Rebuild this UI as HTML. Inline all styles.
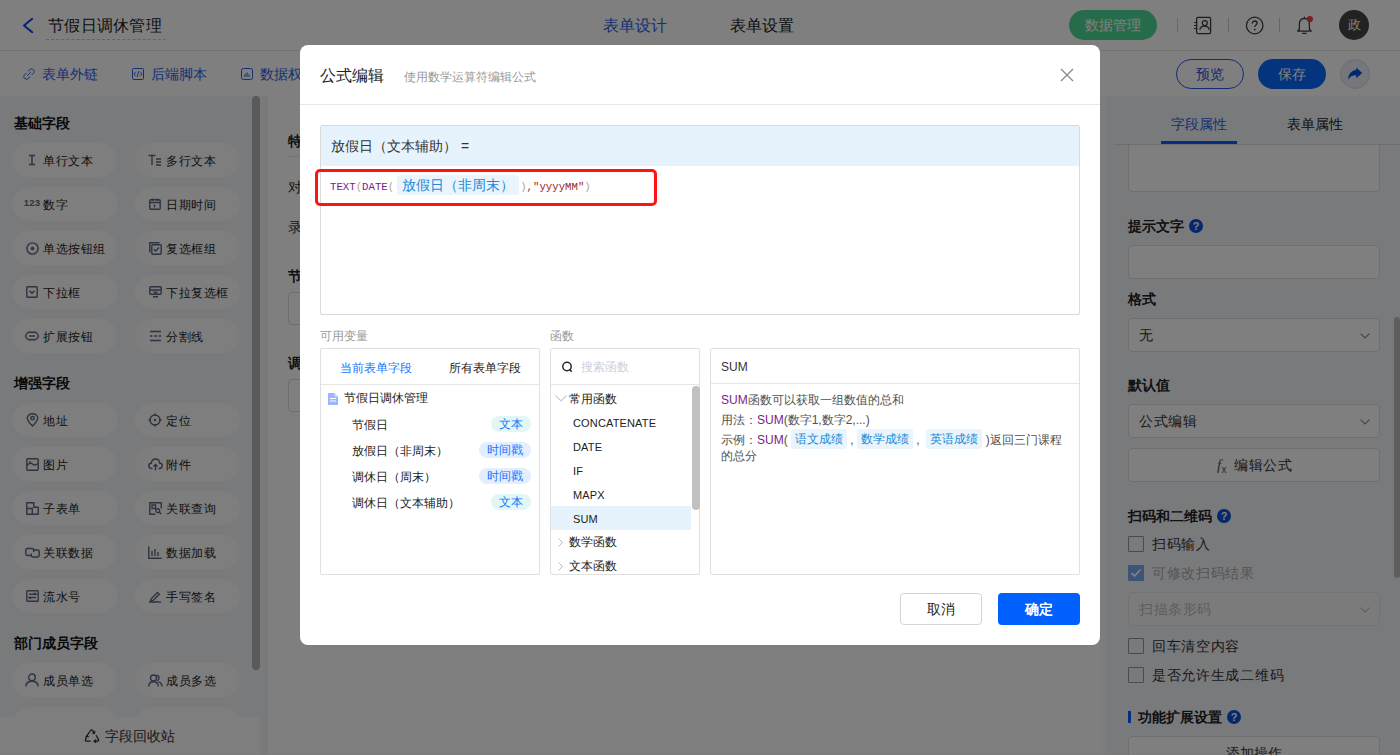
<!DOCTYPE html>
<html><head><meta charset="utf-8">
<style>
*{box-sizing:border-box;margin:0;padding:0}
html,body{width:1400px;height:755px;overflow:hidden;background:#fff;font-family:"Liberation Sans",sans-serif;color:#333}
.a{position:absolute}
#app{position:absolute;left:0;top:0;width:1400px;height:755px;background:#fff}
.hdr{position:absolute;left:0;top:0;width:1400px;height:51px;border-bottom:1px solid #e4e4e4;background:#fff}
.tb{position:absolute;left:0;top:51px;width:1400px;height:45px;background:#fff}
.lp{position:absolute;left:0;top:96px;width:268px;height:659px;background:#f3f5f9}
.chip{position:absolute;width:105px;height:34px;border-radius:17px;background:#fcfcfd;font-size:12px;color:#222;line-height:34px}
.chip .t{position:absolute;left:31px;top:1px;letter-spacing:0.5px}
.chip .ic{position:absolute;left:12px;top:0;width:16px;height:34px;display:flex;align-items:center;justify-content:center;font-style:normal}
.lh{position:absolute;left:14px;margin-top:-1px;font-size:14px;font-weight:bold;color:#111;line-height:16px}
.rp{position:absolute;left:1100px;top:96px;width:300px;height:659px;background:#fbfbfb}
.rpi{position:absolute;left:6px;top:0;width:294px;height:659px;background:#f3f5f9}
.mask{position:absolute;left:0;top:0;width:1400px;height:755px;background:rgba(0,0,0,.5)}
.modal{position:absolute;left:300px;top:45px;width:800px;height:600px;background:#fff;border-radius:8px;overflow:hidden}
.tbl{position:absolute;top:1px;height:45px;line-height:45px;font-size:14px;color:#2a5ee8}
.tbl svg{position:absolute;top:16px;left:0}
.tbl span{position:absolute;left:19px;top:0;white-space:nowrap}
.inp{position:absolute;left:22px;width:252px;height:34px;border:1px solid #dedfe2;border-radius:4px;background:#fff}
.inp .v{position:absolute;left:10px;top:0;line-height:32px;font-size:14px;color:#333;letter-spacing:0.5px}
.inp .chev{position:absolute;right:9px;top:14px}
.inp.dis{background:#f7f7f8;border-color:#e6e6e8}
.lbl{position:absolute;left:22px;font-size:14px;font-weight:bold;line-height:16px;color:#222;white-space:nowrap}
.q{display:inline-block;width:14px;height:14px;border-radius:7px;background:#0b4fd8;color:#fff;font-style:normal;font-size:11px;font-weight:bold;line-height:14px;text-align:center;margin-left:5px;vertical-align:1px}
.cb{position:absolute;left:22px;height:16px;line-height:16px;font-size:14px;color:#333;padding-left:24px;white-space:nowrap;letter-spacing:0.7px}
.cb i{position:absolute;left:0;top:0;width:16px;height:16px;border:1px solid #94949e;border-radius:1px;background:transparent}
.cb.ck{color:#aaa}
.cb.ck i{background:#78a6f5;border-color:#78a6f5}
.cb.ck i svg{position:absolute;left:-1px;top:-1px}
.code{font-family:"Liberation Mono",monospace;font-size:10.7px;line-height:20px;white-space:nowrap;height:20px}
.code span{display:inline-block;vertical-align:top}
.fn{color:#7a1b8c}.pa{color:#b5a58a}.pu{color:#555}.st{color:#a11c1c}
.vt{font-family:"Liberation Sans",sans-serif;font-size:14px;position:relative;top:-2px;color:#1a8ad6;background:#e9f4fd;border-radius:3px;height:20px;line-height:20px;padding:0 5px;margin:0 1px 0 3px}
.sec{top:284px;font-size:12px;line-height:14px;color:#999}
.pnl{top:303px;height:227px;border:1px solid #e0e0e0;border-radius:2px}
.vi{position:absolute;left:31px;width:179px;height:16px;font-size:12px;line-height:16px;color:#222;white-space:nowrap}
.tg{position:absolute;right:0;top:-1px;height:16px;border-radius:8px;padding:0 8px;font-size:12px;line-height:16px;color:#1677ff}
.tg.c{background:#e2f7f5}.tg.b{background:#e3eeff}
.fi{position:absolute;font-size:12px;line-height:14px;color:#222;white-space:nowrap}
.fi.en{font-size:11px;letter-spacing:0.15px}
.ds{position:absolute;left:10px;font-size:12px;line-height:16px;color:#505050}
.pp{color:#7a1b8c}
.dt{display:inline-block;background:#e9f4fd;color:#1a8ad6;border-radius:3px;padding:0 4px;line-height:20px;height:20px;vertical-align:top;margin-top:-3px}
</style></head><body>
<div id="app">
  <div class="hdr">
    <svg class="a" style="left:22px;top:17px" width="12" height="17" viewBox="0 0 12 17"><path d="M10.2 1.8 L2 8.5 L10.2 15.2" fill="none" stroke="#0a46e0" stroke-width="2" stroke-linecap="round" stroke-linejoin="round"/></svg>
    <div class="a" style="left:48px;top:15px;font-size:16px;line-height:22px;color:#222;white-space:nowrap;letter-spacing:0.3px">节假日调休管理</div>
    <div class="a" style="left:46px;top:39px;width:120px;border-top:1px dashed #c8c8c8"></div>
    <div class="a" style="left:603px;top:15px;font-size:16px;line-height:22px;color:#2a5ee8">表单设计</div>
    <div class="a" style="left:730px;top:15px;font-size:16px;line-height:22px;color:#222">表单设置</div>
    <div class="a" style="left:1069px;top:10px;width:88px;height:30px;border-radius:15px;background:#4fd895;color:#fff;font-size:14px;line-height:30px;text-align:center">数据管理</div>
    <div class="a" style="left:1177px;top:18px;width:1px;height:14px;background:#ccc"></div>
    <div class="a" style="left:1228px;top:18px;width:1px;height:14px;background:#ccc"></div>
    <div class="a" style="left:1279px;top:18px;width:1px;height:14px;background:#ccc"></div>
    <svg class="a" style="left:1192px;top:16px" width="20" height="19" viewBox="0 0 20 19"><rect x="4.6" y="1.4" width="14" height="16.2" rx="1.3" fill="none" stroke="#3a3a3a" stroke-width="1.25"/><circle cx="12.8" cy="7" r="2.5" fill="none" stroke="#3a3a3a" stroke-width="1.25"/><path d="M7.8 13.8 C8.2 11.2 10.2 10.2 12.6 10.2 C15 10.2 16.8 11.2 17.2 13.8" fill="none" stroke="#3a3a3a" stroke-width="1.25"/><path d="M2 6.5h3.5M2 9.5h3.5M2 12.5h3.5" stroke="#3a3a3a" stroke-width="1.2"/></svg>
    <svg class="a" style="left:1245px;top:16px" width="19" height="19" viewBox="0 0 19 19"><circle cx="9.7" cy="9.5" r="8.3" fill="none" stroke="#3a3a3a" stroke-width="1.25"/><path d="M7.3 7.4 C7.3 5.9 8.4 5 9.7 5 C11 5 12.1 5.9 12.1 7.2 C12.1 8.8 9.8 9 9.8 11" fill="none" stroke="#3a3a3a" stroke-width="1.3"/><circle cx="9.8" cy="13.6" r="0.85" fill="#3a3a3a"/></svg>
    <svg class="a" style="left:1296px;top:15px" width="18" height="20" viewBox="0 0 18 20"><path d="M1.6 16 L3.4 14.2 L3.4 9 C3.4 5.8 5.6 3.6 8.4 3.4 C11.2 3.6 13.4 5.8 13.4 9 L13.4 14.2 L15.2 16 Z" fill="none" stroke="#3a3a3a" stroke-width="1.25" stroke-linejoin="round"/><path d="M6.8 18.4h3.2" stroke="#3a3a3a" stroke-width="1.3" stroke-linecap="round"/><path d="M8.4 1.8v1.6" stroke="#3a3a3a" stroke-width="1.2"/><circle cx="13.9" cy="4.1" r="3.1" fill="#ff3b3b"/></svg>
    <div class="a" style="left:1339px;top:10px;width:30px;height:30px;border-radius:15px;background:#444;color:#fff;font-size:13px;line-height:30px;text-align:center">政</div>
  </div>
  <div class="tb">
    <div class="tbl" style="left:23px"><svg width="12" height="12" viewBox="0 0 12 12"><path d="M5 3.3 L6.8 1.6 C7.8 0.6 9.5 0.6 10.4 1.6 C11.4 2.5 11.4 4.2 10.4 5.2 L8.6 7 M7 8.7 L5.2 10.4 C4.2 11.4 2.5 11.4 1.6 10.4 C0.6 9.5 0.6 7.8 1.6 6.8 L3.4 5 M4.3 7.7 L7.7 4.3" fill="none" stroke="#2a5ee8" stroke-width="1"/></svg><span>表单外链</span></div>
    <div class="tbl" style="left:132px"><svg width="12" height="12" viewBox="0 0 12 12"><rect x="0.5" y="0.5" width="11" height="11" rx="1" fill="none" stroke="#2a5ee8" stroke-width="1"/><path d="M3.8 3.8 L1.9 6 L3.8 8.2 M8.2 3.8 L10.1 6 L8.2 8.2 M6.9 3 L5.1 9" fill="none" stroke="#2a5ee8" stroke-width="0.9"/></svg><span>后端脚本</span></div>
    <div class="tbl" style="left:241px"><svg width="12" height="12" viewBox="0 0 12 12"><rect x="0.5" y="0.5" width="11" height="11" rx="2" fill="none" stroke="#2a5ee8" stroke-width="1"/><path d="M4 6v3M6 4.5v4.5M8 6.5v2.5" stroke="#2a5ee8" stroke-width="1"/></svg><span>数据权限</span></div>
    <div class="a" style="left:1176px;top:8px;width:68px;height:30px;border:1px solid #1f5ce6;border-radius:15px;color:#1f4fd8;font-size:14px;line-height:28px;text-align:center">预览</div>
    <div class="a" style="left:1258px;top:8px;width:68px;height:30px;border-radius:15px;background:#0a68ff;color:#fff;font-size:14px;line-height:30px;text-align:center">保存</div>
    <div class="a" style="left:1340px;top:8px;width:30px;height:30px;border-radius:15px;background:#eaeef6;border:1px solid #d3dcf0"></div>
    <svg class="a" style="left:1340px;top:8px" width="30" height="30" viewBox="0 0 30 30"><path d="M8 20.8 C8.3 15 11.8 11.4 16.2 11.1 L16.2 8.6 L22.2 13.9 L16.2 19.2 L16.2 16.3 C12.5 16.2 10 17.6 8 20.8 Z" fill="#0a4fe0"/></svg>
  </div>
<div class="a" style="left:288px;top:133px;font-size:14px;font-weight:bold;line-height:16px;color:#222">特殊</div>
<div class="a" style="left:288px;top:156px;width:200px;height:1px;background:#e8e8e8"></div>
<div class="a" style="left:288px;top:179px;font-size:14px;line-height:16px;color:#333">对</div>
<div class="a" style="left:288px;top:219px;font-size:14px;line-height:16px;color:#333">录</div>
<div class="a" style="left:288px;top:268px;font-size:14px;font-weight:bold;line-height:16px;color:#222">节</div>
<div class="a" style="left:288px;top:292px;width:200px;height:33px;border:1px solid #dcdcdc;border-radius:4px"></div>
<div class="a" style="left:288px;top:355px;font-size:14px;font-weight:bold;line-height:16px;color:#222">调</div>
<div class="a" style="left:288px;top:379px;width:200px;height:33px;border:1px solid #dcdcdc;border-radius:4px"></div>
  <div class="lp">
<div class="lh" style="top:20px">基础字段</div>
<div class="lh" style="top:280px">增强字段</div>
<div class="lh" style="top:540px">部门成员字段</div>
<div class="chip" style="left:12px;top:47px"><i class="ic"><svg width="12" height="12" viewBox="0 0 12 12"><path d="M3 1.5h6M3 10.5h6M6 1.5v9" stroke="#5a6682" stroke-width="1.4" fill="none"/></svg></i><span class="t">单行文本</span></div>
<div class="chip" style="left:135px;top:47px"><i class="ic"><svg width="14" height="12" viewBox="0 0 14 12"><path d="M0.5 1.5h7M4 1.5v9.5M8 5h5M8 8h5M8 11h5" stroke="#5a6682" stroke-width="1.4" fill="none"/></svg></i><span class="t">多行文本</span></div>
<div class="chip" style="left:12px;top:91px"><i class="ic"><b style="font-family:'Liberation Sans',sans-serif;font-weight:bold;font-size:9.5px;line-height:10px;color:#5a6682;margin-top:-2px;letter-spacing:0.2px">123</b></i><span class="t">数字</span></div>
<div class="chip" style="left:135px;top:91px"><i class="ic"><svg width="12" height="12" viewBox="0 0 12 12"><rect x="0.8" y="1.8" width="10.4" height="9.4" rx="1" stroke="#5a6682" stroke-width="1.4" fill="none"/><path d="M0.8 4.5h10.4M3.5 0.5v2.5M8.5 0.5v2.5M5.5 6.5v3" stroke="#5a6682" stroke-width="1.4" fill="none"/></svg></i><span class="t">日期时间</span></div>
<div class="chip" style="left:12px;top:135px"><i class="ic"><svg width="13" height="13" viewBox="0 0 13 13"><circle cx="6.5" cy="6.5" r="5.6" stroke="#5a6682" stroke-width="1.4" fill="none"/><circle cx="6.5" cy="6.5" r="1.8" fill="#5d6a85"/></svg></i><span class="t">单选按钮组</span></div>
<div class="chip" style="left:135px;top:135px"><i class="ic"><svg width="13" height="13" viewBox="0 0 13 13"><path d="M0.8 10.5V0.8h9.7" stroke="#5a6682" stroke-width="1.4" fill="none"/><rect x="2.8" y="2.8" width="9.4" height="9.4" rx="1" stroke="#5a6682" stroke-width="1.4" fill="none"/><path d="M4.8 7.3l1.8 1.8 3.4-3.6" stroke="#5a6682" stroke-width="1.4" fill="none"/></svg></i><span class="t">复选框组</span></div>
<div class="chip" style="left:12px;top:179px"><i class="ic"><svg width="12" height="12" viewBox="0 0 12 12"><rect x="0.8" y="0.8" width="10.4" height="10.4" rx="1" stroke="#5a6682" stroke-width="1.4" fill="none"/><path d="M3.5 4.8l2.5 2.4 2.5-2.4" stroke="#5a6682" stroke-width="1.4" fill="none"/></svg></i><span class="t">下拉框</span></div>
<div class="chip" style="left:135px;top:179px"><i class="ic"><svg width="13" height="12" viewBox="0 0 13 12"><rect x="0.8" y="0.8" width="11.4" height="7.4" rx="1" stroke="#5a6682" stroke-width="1.4" fill="none"/><path d="M0.8 4h11.4M4 10.8h5" stroke="#5a6682" stroke-width="1.4" fill="none"/><path d="M4.5 5.5l2 1.5 2-1.5" stroke="#5a6682" stroke-width="1.4" fill="none"/></svg></i><span class="t">下拉复选框</span></div>
<div class="chip" style="left:12px;top:223px"><i class="ic"><svg width="14" height="10" viewBox="0 0 14 10"><rect x="0.8" y="1.3" width="12.4" height="7.4" rx="3.7" stroke="#5a6682" stroke-width="1.4" fill="none"/><path d="M4 5h6" stroke="#5a6682" stroke-width="1.4" fill="none"/></svg></i><span class="t">扩展按钮</span></div>
<div class="chip" style="left:135px;top:223px"><i class="ic"><svg width="13" height="12" viewBox="0 0 13 12"><path d="M1 1.5h11M1 10.5h11M1 6h2.5M5 6h3M9.5 6h2.5" stroke="#5a6682" stroke-width="1.4" fill="none"/></svg></i><span class="t">分割线</span></div>
<div class="chip" style="left:12px;top:307px"><i class="ic"><svg width="13" height="14" viewBox="0 0 13 14"><path d="M6.5 13 C3 9.5 1.3 7 1.3 5.2 C1.3 2.5 3.6 0.8 6.5 0.8 C9.4 0.8 11.7 2.5 11.7 5.2 C11.7 7 10 9.5 6.5 13Z" stroke="#5a6682" stroke-width="1.4" fill="none"/><circle cx="6.5" cy="5.2" r="1.7" stroke="#5a6682" stroke-width="1.4" fill="none"/></svg></i><span class="t">地址</span></div>
<div class="chip" style="left:135px;top:307px"><i class="ic"><svg width="14" height="14" viewBox="0 0 14 14"><circle cx="7" cy="7" r="5" stroke="#5a6682" stroke-width="1.4" fill="none"/><circle cx="7" cy="7" r="1.3" fill="#5d6a85"/><path d="M7 0.5v2.5M7 11v2.5M0.5 7h2.5M11 7h2.5" stroke="#5a6682" stroke-width="1.4" fill="none"/></svg></i><span class="t">定位</span></div>
<div class="chip" style="left:12px;top:351px"><i class="ic"><svg width="13" height="13" viewBox="0 0 13 13"><rect x="0.8" y="0.8" width="11.4" height="11.4" rx="1" stroke="#5a6682" stroke-width="1.4" fill="none"/><path d="M1 7.5 C3 5 5 4.5 7 6.5 C8.5 7.5 10 7 12 5.5" stroke="#5a6682" stroke-width="1.4" fill="none"/><circle cx="4" cy="4" r="0.9" fill="#5d6a85"/></svg></i><span class="t">图片</span></div>
<div class="chip" style="left:135px;top:351px"><i class="ic"><svg width="15" height="13" viewBox="0 0 15 13"><path d="M4.5 10.5H3.5C1.8 10.5 0.8 9.2 0.8 7.8C0.8 6.3 2 5.2 3.3 5.2C3.6 2.7 5.4 1 7.5 1C9.8 1 11.5 2.8 11.6 5C13.1 5 14.2 6.2 14.2 7.7C14.2 9.3 13 10.5 11.5 10.5H10.5" stroke="#5a6682" stroke-width="1.4" fill="none"/><path d="M7.5 12.5V6.5M5.5 8.5l2-2 2 2" stroke="#5a6682" stroke-width="1.4" fill="none"/></svg></i><span class="t">附件</span></div>
<div class="chip" style="left:12px;top:395px"><i class="ic"><svg width="13" height="13" viewBox="0 0 13 13"><path d="M0.8 0.8h7v4.5h4.4v7H0.8Z" stroke="#5a6682" stroke-width="1.4" fill="none"/><path d="M0.8 6.5h5.5v5.7" stroke="#5a6682" stroke-width="1.4" fill="none"/></svg></i><span class="t">子表单</span></div>
<div class="chip" style="left:135px;top:395px"><i class="ic"><svg width="13" height="13" viewBox="0 0 13 13"><path d="M12.2 6.5V0.8H0.8v11.4h5.5" stroke="#5a6682" stroke-width="1.4" fill="none"/><rect x="3" y="3" width="3.5" height="3.5" stroke="#5a6682" stroke-width="1.4" fill="none"/><circle cx="8.7" cy="8.7" r="1.9" stroke="#5a6682" stroke-width="1.4" fill="none"/><path d="M10.1 10.1l2 2" stroke="#5a6682" stroke-width="1.4" fill="none"/></svg></i><span class="t">关联查询</span></div>
<div class="chip" style="left:12px;top:439px"><i class="ic"><svg width="15" height="11" viewBox="0 0 15 11"><path d="M6 8.5H2.5C1.5 8.5 0.8 7.8 0.8 6.8V3.2C0.8 2.2 1.5 1.5 2.5 1.5H7C8 1.5 8.7 2.2 8.7 3.2V5" stroke="#5a6682" stroke-width="1.4" fill="none"/><path d="M9 3H12.5C13.5 3 14.2 3.7 14.2 4.7V8.3C14.2 9.3 13.5 10 12.5 10H8C7 10 6.3 9.3 6.3 8.3V6.5" stroke="#5a6682" stroke-width="1.4" fill="none"/></svg></i><span class="t">关联数据</span></div>
<div class="chip" style="left:135px;top:439px"><i class="ic"><svg width="14" height="13" viewBox="0 0 14 13"><path d="M0.8 0.5v11.7h12.7M4 5v5M7 3v7M10 6v4" stroke="#5a6682" stroke-width="1.4" fill="none"/></svg></i><span class="t">数据加载</span></div>
<div class="chip" style="left:12px;top:483px"><i class="ic"><svg width="13" height="12" viewBox="0 0 13 12"><rect x="0.8" y="0.8" width="11.4" height="10.4" rx="0.8" stroke="#5a6682" stroke-width="1.4" fill="none"/><path d="M3 4.3h7L8.3 2.8M10 7.5H3l1.7 1.5" stroke="#5a6682" stroke-width="1.4" fill="none"/></svg></i><span class="t">流水号</span></div>
<div class="chip" style="left:135px;top:483px"><i class="ic"><svg width="14" height="13" viewBox="0 0 14 13"><path d="M3 9 L9.5 2.5 L11.3 4.3 L4.8 10.8 L2.6 11.2 Z" stroke="#5a6682" stroke-width="1.4" fill="none"/><path d="M1 12.3 C3 11.5 5 12.8 7 12 C9 11.3 11 12.5 13 12" stroke="#5a6682" stroke-width="1.4" fill="none"/></svg></i><span class="t">手写签名</span></div>
<div class="chip" style="left:12px;top:567px"><i class="ic"><svg width="14" height="14" viewBox="0 0 14 14"><circle cx="7" cy="4.3" r="3.3" stroke="#5a6682" stroke-width="1.4" fill="none"/><path d="M1 13.5C1 10 3.5 8.3 7 8.3C10.5 8.3 13 10 13 13.5" stroke="#5a6682" stroke-width="1.4" fill="none"/></svg></i><span class="t">成员单选</span></div>
<div class="chip" style="left:135px;top:567px"><i class="ic"><svg width="15" height="13" viewBox="0 0 15 13"><circle cx="5.5" cy="4" r="3" stroke="#5a6682" stroke-width="1.4" fill="none"/><path d="M0.8 12.5C0.8 9.5 2.8 7.8 5.5 7.8C8.2 7.8 10.2 9.5 10.2 12.5M8.5 1.2C10 1.3 11 2.5 11 4C11 5.5 10 6.5 9 6.8M10.5 7.9C12.5 8.5 14 10 14 12.5" stroke="#5a6682" stroke-width="1.4" fill="none"/></svg></i><span class="t">成员多选</span></div>
<div class="chip" style="left:12px;top:611px"><i class="ic"></i><span class="t"></span></div>
<div class="chip" style="left:135px;top:611px"><i class="ic"></i><span class="t"></span></div>
<div class="a" style="left:252px;top:0;width:8px;height:574px;border-radius:4px;background:#b2b2b2"></div>
<div class="a" style="left:0;top:621px;width:260px;height:38px;background:#fcfcfc;font-size:14px;color:#333;line-height:38px">
<svg class="a" style="left:84px;top:12px" width="16" height="14" viewBox="0 0 16 14"><g fill="none" stroke="#2a2a2a" stroke-width="1.2" stroke-linecap="round" stroke-linejoin="round"><path d="M2.8 6.8 L6.6 1.5 Q7.6 0.4 8.6 1.5 L10.4 4.3"/><path d="M10.4 4.3 L10.9 2.3 M10.4 4.3 L8.4 4"/><path d="M12.2 6.5 L14.6 10.6 Q15 12.2 13.6 12.2 L10.2 12.2"/><path d="M10.2 12.2 L11.8 10.8 M10.2 12.2 L11.8 13.4"/><path d="M6.2 12.2 L2.4 12.2 Q1 12.1 1.4 10.7 L2.4 8.9"/><path d="M2.8 6.8 L1.8 8.4 M2.8 6.8 L4.4 7.8"/></g></svg>
<span class="a" style="left:105px;top:0">字段回收站</span></div>
</div>
  <div class="rp"><div class="rpi">
<div class="a" style="left:8px;top:48px;width:286px;height:1px;background:#dcdde0"></div>
<div class="a" style="left:65px;top:20px;font-size:14px;line-height:16px;color:#2a5ee8">字段属性</div>
<div class="a" style="left:55px;top:45px;width:76px;height:3px;background:#0a5cff"></div>
<div class="a" style="left:181px;top:20px;font-size:14px;line-height:16px;color:#222">表单属性</div>
<div class="inp" style="top:0;height:96px;border-top:none;border-radius:0 0 4px 4px;top:49px;height:47px"></div>
<div class="lbl" style="top:122px">提示文字<i class="q">?</i></div>
<div class="inp" style="top:149px"></div>
<div class="lbl" style="top:195px">格式</div>
<div class="inp" style="top:222px"><span class="v">无</span><svg class="chev" width="10" height="6" viewBox="0 0 10 6"><path d="M0.6 0.6L5 5L9.4 0.6" fill="none" stroke="#888" stroke-width="1.2"/></svg></div>
<div class="lbl" style="top:281px">默认值</div>
<div class="inp" style="top:308px"><span class="v">公式编辑</span><svg class="chev" width="10" height="6" viewBox="0 0 10 6"><path d="M0.6 0.6L5 5L9.4 0.6" fill="none" stroke="#888" stroke-width="1.2"/></svg></div>
<div class="inp" style="top:352px;text-align:center;line-height:32px;font-size:14px;color:#333;letter-spacing:0.5px;padding-left:1px"><span style="font-family:'Liberation Serif';font-style:italic;font-size:15px;color:#555;margin-right:7px">f<sub style="font-size:10px;font-style:normal;font-family:'Liberation Sans';margin-left:0px;vertical-align:-3px;line-height:0">x</sub></span>编辑公式</div>
<div class="lbl" style="top:412px">扫码和二维码<i class="q">?</i></div>
<div class="cb" style="top:440px"><i></i>扫码输入</div>
<div class="cb ck" style="top:469px"><i><svg width="16" height="16" viewBox="0 0 16 16"><path d="M3.5 8l3 3 6-6.5" fill="none" stroke="#fff" stroke-width="1.8"/></svg></i>可修改扫码结果</div>
<div class="inp dis" style="top:496px"><span class="v" style="color:#bbb">扫描条形码</span><svg class="chev" width="10" height="6" viewBox="0 0 10 6"><path d="M0.6 0.6L5 5L9.4 0.6" fill="none" stroke="#bbb" stroke-width="1.2"/></svg></div>
<div class="cb" style="top:542px"><i></i>回车清空内容</div>
<div class="cb" style="top:571px"><i></i>是否允许生成二维码</div>
<div class="a" style="left:22px;top:615px;width:3px;height:12px;background:#0a5cff"></div>
<div class="lbl" style="top:613px;left:32px">功能扩展设置<i class="q">?</i></div>
<div class="inp" style="top:640px;text-align:center;line-height:32px;font-size:14px;color:#333">添加操作</div>
<div class="a" style="left:288px;top:221px;width:6px;height:261px;border-radius:3px;background:#bdbdbd"></div>
</div></div>
</div>
<div class="mask"></div>
<div class="modal">
<div class="a" style="left:20px;top:20px;font-size:16px;line-height:22px;color:#222;white-space:nowrap">公式编辑</div>
<div class="a" style="left:104px;top:23px;font-size:12px;line-height:18px;color:#999;white-space:nowrap">使用数学运算符编辑公式</div>
<svg class="a" style="left:760px;top:23px" width="14" height="14" viewBox="0 0 14 14"><path d="M1 1L13 13M13 1L1 13" stroke="#888" stroke-width="1.3"/></svg>
<div class="a" style="left:0;top:59px;width:800px;height:1px;background:#e8e8e8"></div>
<div class="a" style="left:20px;top:80px;width:760px;height:190px;border:1px solid #dadada;border-radius:2px">
  <div class="a" style="left:0;top:0;width:758px;height:40px;background:#e6f3fd"></div>
  <div class="a" style="left:10px;top:12px;font-size:14px;line-height:16px;color:#333;white-space:nowrap">放假日（文本辅助） =</div>
  <div class="a code" style="left:9px;top:51px">
    <span class="fn">TEXT</span><span class="pa">(</span><span class="fn">DATE</span><span class="pa">(</span><span class="vt">放假日（非周末）</span><span class="pa">)</span><span class="pu">,</span><span class="st">"yyyyMM"</span><span class="pa">)</span>
  </div>
</div>
<div class="a" style="left:15px;top:124px;width:342px;height:37px;border:3px solid #ff1414;border-radius:5px"></div>
<div class="a sec" style="left:20px">可用变量</div>
<div class="a sec" style="left:250px">函数</div>
<div class="a pnl" style="left:20px;width:220px">
  <div class="a" style="left:0;top:0;width:218px;height:36px;border-bottom:1px solid #e6e6e6"></div>
  <div class="a" style="left:19px;top:12px;font-size:12px;line-height:14px;color:#1677ff">当前表单字段</div>
  <div class="a" style="left:128px;top:12px;font-size:12px;line-height:14px;color:#222">所有表单字段</div>
  <svg class="a" style="left:7px;top:44px" width="10" height="12" viewBox="0 0 10 12"><path d="M0 0H6.5L10 3.5V12H0Z" fill="#9fb4ff"/><path d="M2 5.5h6M2 8h6" stroke="#fff" stroke-width="1.1"/><path d="M6.5 0V3.5H10" fill="#d8e1ff"/></svg>
  <div class="a" style="left:23px;top:42px;font-size:12px;line-height:14px;color:#222;white-space:nowrap">节假日调休管理</div>
  <div class="vi" style="top:68px">节假日<span class="tg c">文本</span></div>
  <div class="vi" style="top:94px">放假日（非周末）<span class="tg b">时间戳</span></div>
  <div class="vi" style="top:120px">调休日（周末）<span class="tg b">时间戳</span></div>
  <div class="vi" style="top:146px">调休日（文本辅助）<span class="tg c">文本</span></div>
</div>
<div class="a pnl" style="left:250px;width:150px">
  <div class="a" style="left:0;top:0;width:148px;height:36px;border-bottom:1px solid #e6e6e6"></div>
  <svg class="a" style="left:10px;top:12px" width="13" height="13" viewBox="0 0 13 13"><circle cx="6" cy="5.5" r="4.2" fill="none" stroke="#2a2a2a" stroke-width="1.5"/><path d="M8.6 8.4L10.6 10.6" stroke="#2a2a2a" stroke-width="1.6"/></svg>
  <div class="a" style="left:30px;top:11px;font-size:12px;line-height:14px;color:#cdd1dc">搜索函数</div>
  <div class="a" style="left:0;top:157px;width:140px;height:24px;background:#e6f3fd"></div>
  <svg class="a" style="left:3.5px;top:46px" width="12" height="7" viewBox="0 0 12 7"><path d="M0.5 0.5L6 6L11.5 0.5" fill="none" stroke="#c3cadb" stroke-width="1.1"/></svg>
  <div class="fi" style="left:18px;top:43px">常用函数</div>
  <div class="fi en" style="left:22px;top:67px">CONCATENATE</div>
  <div class="fi en" style="left:22px;top:91px">DATE</div>
  <div class="fi en" style="left:22px;top:115px">IF</div>
  <div class="fi en" style="left:22px;top:139px">MAPX</div>
  <div class="fi en" style="left:22px;top:163px">SUM</div>
  <svg class="a" style="left:7px;top:189px" width="5" height="9" viewBox="0 0 5 9"><path d="M0.5 0.5L4.5 4.5L0.5 8.5" fill="none" stroke="#bbb" stroke-width="1"/></svg>
  <div class="fi" style="left:18px;top:186px">数学函数</div>
  <svg class="a" style="left:7px;top:213px" width="5" height="9" viewBox="0 0 5 9"><path d="M0.5 0.5L4.5 4.5L0.5 8.5" fill="none" stroke="#bbb" stroke-width="1"/></svg>
  <div class="fi" style="left:18px;top:210px">文本函数</div>
  <div class="a" style="left:141px;top:37px;width:8px;height:124px;border-radius:4px;background:#c1c1c1"></div>
</div>
<div class="a pnl" style="left:410px;width:370px">
  <div class="a" style="left:0;top:0;width:368px;height:35px;border-bottom:1px solid #e6e6e6"></div>
  <div class="a" style="left:10px;top:11px;font-size:12px;line-height:14px;color:#333">SUM</div>
  <div class="ds" style="top:43px"><span class="pp">SUM</span>函数可以获取一组数值的总和</div>
  <div class="ds" style="top:63px">用法：<span class="pp">SUM</span>(数字1,数字2,...)</div>
  <div class="ds" style="top:83px;white-space:nowrap">示例：<span class="pp">SUM</span>( <span class="dt">语文成绩</span> , <span class="dt">数学成绩</span> ,&nbsp; <span class="dt">英语成绩</span> )返回三门课程</div>
  <div class="ds" style="top:99px">的总分</div>
</div>
<div class="a" style="left:600px;top:548px;width:82px;height:32px;border:1px solid #d5d5d5;border-radius:4px;font-size:14px;line-height:30px;text-align:center;color:#222">取消</div>
<div class="a" style="left:698px;top:548px;width:82px;height:32px;border-radius:4px;background:#0061ff;font-size:14px;line-height:32px;text-align:center;color:#fff;font-weight:bold">确定</div>
</div>
</body></html>
